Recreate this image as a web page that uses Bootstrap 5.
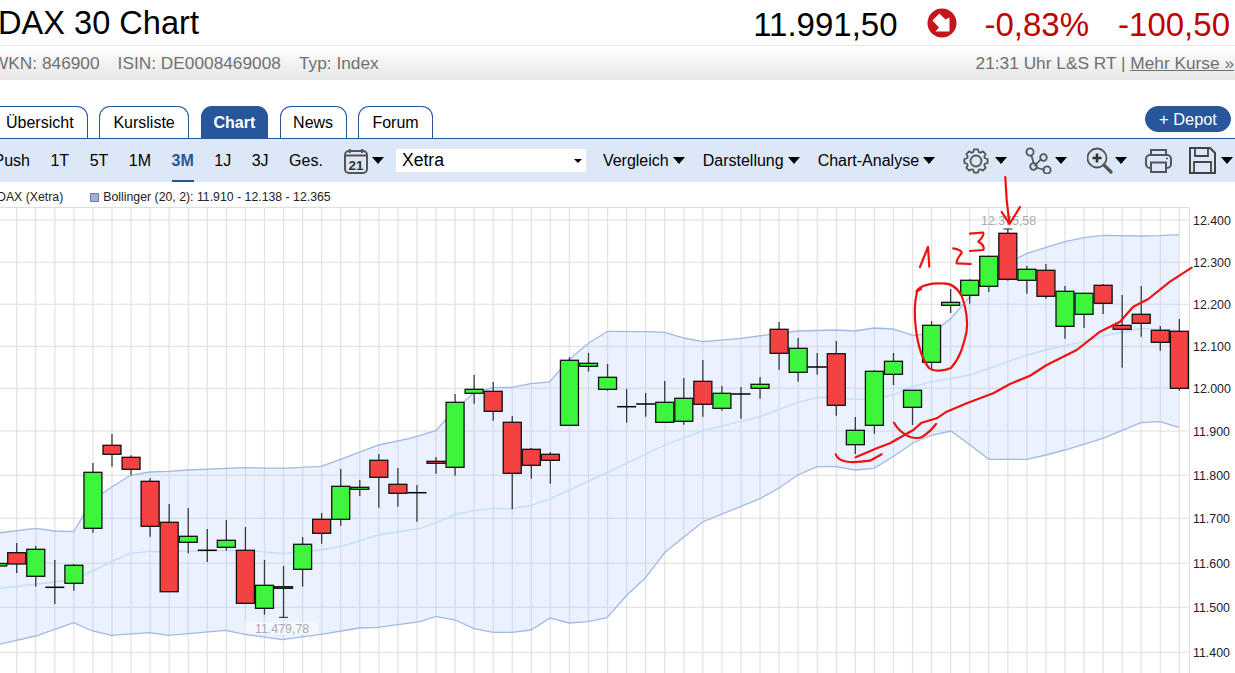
<!DOCTYPE html>
<html lang="de">
<head>
<meta charset="utf-8">
<title>DAX 30 Chart</title>
<link href="https://cdn.jsdelivr.net/npm/bootstrap@5.3.0/dist/css/bootstrap.min.css" rel="stylesheet">
<style>
html,body{height:673px;overflow:hidden;background:#fff;}
body{font-family:"Liberation Sans",Arial,sans-serif;font-size:16px;color:#000;}
.title-row{height:45px;padding-right:5px;}
.title-main{font-size:32.6px;font-weight:400;margin:0 0 0 -2px;line-height:45px;white-space:nowrap;}
.quote-val{font-size:33px;line-height:45px;margin-top:4px;white-space:nowrap;}
.quote-down{color:#c00000;}
.gap-quote{gap:29px;}
.down-sign{display:block;width:30px;height:30px;margin:0 -1px 0 0;}
.info-row{height:35px;padding-top:2px;border-top:1px solid #e8e8e8;background:linear-gradient(#fff,#e6e6e6);color:#707070;font-size:17.3px;padding-right:1px;}
.info-left{gap:18px;margin-left:-8px;}
.info-row a{color:#707070;}
.tab-row{margin-top:26px;height:33px;border-bottom:1px solid #27569b;padding-right:4px;}
.tab-list{gap:11.3px;margin-left:-10px;border:0;}
.tab-link{display:block;height:32px;line-height:32px;padding:0 13.5px;color:#000;background:#fff;border:1px solid #27569b;border-bottom:0;border-radius:11px 11px 0 0;text-decoration:none;}
.tab-first{padding:0 13px 0 15px;}
.tab-tight{padding:0 12.5px;}
.tab-link.is-on{background:#27569b;color:#fff;font-weight:700;padding:0 12px;}
.depot-btn{width:86px;height:26px;line-height:24px;padding:0;margin-left:1px;border-radius:13px;background:#27569b;border-color:#27569b;color:#fff;font-size:16.4px;}
.tool-row{height:43px;background:#dce8f8;}
.range-list{gap:20.5px;margin-left:-6.5px;}
.range-item{color:#000;text-decoration:none;line-height:43px;display:block;height:43px;}
.range-item.is-on{color:#27569b;font-weight:700;border-bottom:2px solid #27569b;}
.tri{display:inline-block;width:0;height:0;border-left:6px solid transparent;border-right:6px solid transparent;border-top:7px solid #000;}
.ico{display:block;flex:none;}
.cal-wrap{margin-left:21px;gap:4px;}
.market-select{width:192px;height:25px;margin-left:11px;padding:0 0 0 6px;border:1px solid #e4e8ee;border-radius:2px;font-size:17.6px;line-height:23px;color:#000;background-size:8px 4px;background-position:right 4px center;background-image:url("data:image/svg+xml,%3Csvg xmlns='http://www.w3.org/2000/svg' viewBox='0 0 8 4'%3E%3Cpath d='M0 0h8L4 4z'/%3E%3C/svg%3E");}
.menu-item{color:#000;gap:4px;white-space:nowrap;text-decoration:none;}
.menu-a{margin-left:16px;}
.menu-b{margin-left:18px;}
.menu-c{margin-left:18px;}
.ico-a{margin-left:28px;gap:6px;}
.ico-b{margin-left:18px;gap:2px;}
.ico-c{margin-left:20px;gap:2px;}
.ico-d{margin-left:18px;}
.ico-e{margin-left:17px;gap:5px;}
.legend-row{height:25px;padding-top:5px;font-size:12.3px;color:#222;gap:27px;margin-left:-3px;}
.legend-swatch{display:inline-block;width:9px;height:9px;background:#9db0dc;border:1px solid #6f7f9f;margin-right:4px;vertical-align:-1px;}
.chart-svg{display:block;width:1235px;height:466px;overflow:visible;}
.axis-txt{font-family:"Liberation Sans",Arial,sans-serif;font-size:12.4px;fill:#222;}
.mark-txt{font-family:"Liberation Sans",Arial,sans-serif;font-size:12.4px;fill:#aaa;}
</style>
</head>
<body>
<header class="title-row d-flex justify-content-between align-items-center">
  <h1 class="title-main">DAX 30 Chart</h1>
  <div class="d-flex align-items-center gap-quote">
    <span class="quote-val">11.991,50</span>
    <svg class="down-sign" viewBox="0 0 30 30"><circle cx="15" cy="15" r="14.5" fill="#c3161c"/><path d="M12.4 5.500L18.500 11.500 22.500 9.500V23.500H8.500L12 19.500 5.500 12.500z" fill="#fff"/></svg>
    <span class="quote-val quote-down">-0,83%</span>
    <span class="quote-val quote-down">-100,50</span>
  </div>
</header>
<div class="info-row d-flex justify-content-between align-items-center">
  <div class="d-flex info-left"><span>WKN: 846900</span><span>ISIN: DE0008469008</span><span>Typ: Index</span></div>
  <div>21:31 Uhr L&amp;S RT | <a href="#">Mehr Kurse »</a></div>
</div>
<div class="tab-row d-flex justify-content-between align-items-start">
  <nav class="nav tab-list align-self-end">
    <a class="tab-link tab-first" href="#">Übersicht</a>
    <a class="tab-link" href="#">Kursliste</a>
    <a class="tab-link is-on" href="#">Chart</a>
    <a class="tab-link tab-tight" href="#">News</a>
    <a class="tab-link" href="#">Forum</a>
  </nav>
  <button class="btn depot-btn" type="button">+ Depot</button>
</div>
<div class="tool-row d-flex align-items-center">
  <div class="d-flex range-list">
    <a class="range-item" href="#">Push</a><a class="range-item" href="#">1T</a><a class="range-item" href="#">5T</a><a class="range-item" href="#">1M</a><a class="range-item is-on" href="#">3M</a><a class="range-item" href="#">1J</a><a class="range-item" href="#">3J</a><a class="range-item" href="#">Ges.</a>
  </div>
  <div class="d-flex align-items-center cal-wrap">
    <svg class="ico" width="24" height="26" viewBox="0 0 24 26"><rect x="1" y="3" width="22" height="22" rx="4" fill="none" stroke="#555" stroke-width="2"/><path d="M6 1v4M18 1v4M1 7.500h22" stroke="#555" stroke-width="2" fill="none"/><text x="12" y="21.500" text-anchor="middle" font-family="Liberation Sans" font-weight="700" font-size="13.500" fill="#333">21</text></svg>
    <span class="tri"></span>
  </div>
  <select class="form-select market-select" aria-label="Börse"><option>Xetra</option></select>
  <a class="menu-item menu-a d-flex align-items-center" href="#">Vergleich<span class="tri"></span></a>
  <a class="menu-item menu-b d-flex align-items-center" href="#">Darstellung<span class="tri"></span></a>
  <a class="menu-item menu-c d-flex align-items-center" href="#">Chart-Analyse<span class="tri"></span></a>
  <div class="d-flex align-items-center ico-a">
    <svg class="ico" width="26" height="26" viewBox="-13 -13 26 26"><path id="gearPath" fill="none" stroke="#555" stroke-width="1.800" stroke-linejoin="round"/><circle r="5.500" fill="none" stroke="#555" stroke-width="1.800"/></svg>
    <span class="tri"></span>
  </div>
  <div class="d-flex align-items-center ico-b">
    <svg class="ico" width="28" height="27" viewBox="0 0 28 27" fill="none" stroke="#555" stroke-width="1.800"><path d="M6 8C8 12 8 15 9 17M9.500 19L16 12M11 20.500L20 23"/><circle cx="5" cy="5" r="3.600"/><circle cx="18.500" cy="10.500" r="3.300"/><circle cx="8.500" cy="19.500" r="3.300"/><circle cx="22" cy="23" r="3.600"/></svg>
    <span class="tri"></span>
  </div>
  <div class="d-flex align-items-center ico-c">
    <svg class="ico" width="26" height="27" viewBox="0 0 26 27" fill="none" stroke="#555"><circle cx="10" cy="11" r="9.500" stroke-width="1.800"/><path d="M10 6.500v9M5.500 11h9" stroke="#333" stroke-width="2.600"/><path d="M17 18l7 7" stroke-width="3.200" stroke-linecap="round"/></svg>
    <span class="tri"></span>
  </div>
  <svg class="ico ico-d" width="27" height="25" viewBox="0 0 27 25" fill="none" stroke="#555" stroke-width="2"><path d="M6 7V2h15v5"/><rect x="1" y="7" width="25" height="13" rx="4"/><path d="M6 14.500h15V24H6z" fill="#dce8f8"/><path d="M21 10.500h2" stroke-width="1.500"/></svg>
  <div class="d-flex align-items-center ico-e">
    <svg class="ico" width="27" height="27" viewBox="0 0 27 27" fill="none" stroke="#444" stroke-width="2"><path d="M1 1h20l5 5v20H1z"/><path d="M6 1v8h13V1M5 26V15h17v11" stroke-width="1.800"/></svg>
    <span class="tri"></span>
  </div>
</div>
<div class="legend-row d-flex align-items-center">
  <span class="d-inline-block">DAX (Xetra)</span>
  <span><i class="legend-swatch"></i>Bollinger (20, 2): 11.910 - 12.138 - 12.365</span>
</div>
<svg class="chart-svg" id="chart" viewBox="0 207 1235 466" role="img" aria-label="DAX 30 Candlestick-Chart"></svg>
<script>
(function(){
var X=function(i){return 16.7+i*19.06;};
var hLines=[220,262.3,304.3,346.3,388.3,431,475.3,518.3,563.3,607.3,652.3];
var labels=["12.400","12.300","12.200","12.100","12.000","11.900","11.800","11.700","11.600","11.500","11.400"];
/* [index, wick top, wick bottom, body top, body bottom, type] */
var c=[[-1,558,572,563.5,566,"g"],[0,543,573,552.7,564,"r"],[1,546,586.7,549.3,576.3,"g"],[2,560,604,587.3,587.3,"d"],[3,564,590.7,565.3,583.3,"g"],[4,463,532.7,472.3,528.3,"g"],[5,434,466.7,445.3,454.3,"r"],[6,455.3,475.3,457.3,469.3,"r"],[7,478.3,536.7,481.3,526.3,"r"],[8,504,591.7,522.3,591.7,"r"],[9,508,553.3,536.3,542.3,"g"],[10,529,562,550.3,550.3,"d"],[11,520,550.7,540.3,547.3,"g"],[12,527,603.3,550.3,603.3,"r"],[13,560,614.7,585.3,608.3,"g"],[14,566,617.3,586.7,588.3,"r"],[15,537,586.7,544.3,569.3,"g"],[16,513,543.7,519.3,533.3,"r"],[17,469,525.7,486.3,519.3,"g"],[18,480,496,487.3,489.3,"g"],[19,454,507.7,460.3,477.3,"r"],[20,468,506.7,484.3,493.3,"r"],[21,485,521.7,492.7,492.7,"d"],[22,457,473.7,461.3,463.3,"r"],[23,394,475.7,402.3,467.3,"g"],[24,375,403.7,389.3,393.3,"g"],[25,382,420.7,391.3,411.3,"r"],[26,416,509.3,422.3,473.3,"r"],[27,448,478.7,449.3,465.3,"r"],[28,452,483.7,454.3,460.3,"r"],[29,357.3,425.3,360.3,425.3,"g"],[30,353,371.7,363.3,366.3,"g"],[31,364,390.7,377.3,389.3,"g"],[32,389,422.7,406.7,406.7,"d"],[33,393,416.7,404,404,"d"],[34,381,422.7,402.3,422.3,"g"],[35,378,424.7,398.3,421.3,"g"],[36,360,416.7,381.3,404.3,"r"],[37,386,410.7,393.3,408.3,"g"],[38,387,418.7,394,394,"d"],[39,377,398.7,384.3,388.3,"g"],[40,322,369.7,329.3,353.3,"r"],[41,338,381.7,348.3,372.3,"g"],[42,353,374.7,367,367,"d"],[43,341,415.7,353.7,405.3,"r"],[44,417,454,430.3,444.7,"g"],[45,370.3,433.7,371.3,425.3,"g"],[46,353,385,361.3,374.3,"g"],[47,390.3,425,390.3,407.3,"g"],[48,321,369,325.3,362.3,"g"],[49,289,313,302.3,305.3,"g"],[50,279.3,303.7,280.3,295.3,"g"],[51,256.3,292,256.3,286.3,"g"],[52,229,280.7,233.3,279.3,"r"],[53,266,293.7,269.3,280.3,"g"],[54,264,298.7,270.3,296.3,"r"],[55,286,338.7,291.3,326.3,"g"],[56,293,328,293.3,314.3,"g"],[57,284,314,285.3,303.3,"r"],[58,295,367.7,325.3,329.3,"r"],[59,286,336.7,314.3,323.3,"r"],[60,326,350.7,330.3,342.3,"r"],[61,319,390.7,331.3,388.3,"r"]];
var up=[[-2,533],[35.7,528.3],[54.6,531],[73.7,531.7],[92.5,500],[111.5,487.3],[130.5,475.3],[149.5,472],[168.5,471.3],[187.6,470],[244.6,467.7],[282.6,468.3],[321,466.3],[340.6,459.3],[378.7,445],[410,438.3],[435.7,430.7],[454.7,410],[473.7,393],[492.7,387.7],[511.7,387.3],[530.7,383.7],[549.7,382],[568.7,360],[588.7,343],[607.7,331.3],[646,331.7],[665,332.3],[684,338],[703,341.7],[741,338.3],[779,333.3],[798,331],[836,330],[855,331],[874,328],[893,329],[913,335.3],[932,333.3],[951,318.3],[970,296.7],[989,273],[1008,263.3],[1027,253.3],[1046,247.3],[1065,241.7],[1084,237.7],[1103,235.3],[1141,236],[1160,235.7],[1179,234.7]];
var mid=[[-2,588.7],[54.6,582],[73.7,580],[111.5,561.7],[130.5,553.3],[149.5,551.3],[168.5,551.7],[244.6,550.3],[282.6,553.3],[321,550],[340.6,546.7],[378.7,535],[420,528.3],[436,522.7],[455,514.7],[474,510.7],[493,508.3],[512,508.7],[531,505.3],[549,499.3],[607,472.7],[665,445],[703,430.7],[760,416.7],[798,402.3],[817,397.7],[836,397.5],[855,399.3],[874,399],[893,395],[913,386.7],[932,381.7],[951,378.3],[970,375],[989,368.3],[1008,361.7],[1027,355],[1046,350],[1065,345.7],[1084,341.7],[1103,336],[1141,328.3],[1160,329.3],[1179,330]];
var lo=[[-2,644.5],[35.7,636],[73.7,622.7],[92.5,631],[111.5,635.3],[149.5,632.7],[168.5,635.3],[225.6,630.3],[244.6,634.3],[282.6,639.7],[321,634.3],[359.6,628],[378,627.3],[420,621.7],[436,616.3],[455,620],[474,628.7],[493,632.3],[512,632.3],[531,630],[550,618],[569,623],[588,621.7],[607,617.7],[627,595],[645,578.3],[665,552.3],[703,521.7],[760,498.7],[779,488],[798,475],[817,466.7],[836,466.7],[855,470],[874,468.3],[893,456.7],[913,443],[932,435],[951,431],[970,445],[989,459.3],[1027,459.3],[1046,455],[1065,450],[1103,438.3],[1141,422.7],[1160,421.7],[1179,427.3]];
var pts=function(a){return a.map(function(p){return p[0]+","+p[1];}).join(" ");};
var s="";
for(var i=-1;i<=61;i++){s+='<line x1="'+X(i)+'" x2="'+X(i)+'" y1="207.500" y2="673" stroke="#e4e4e4" stroke-width="1.300"/>';}
hLines.forEach(function(y,k){s+='<line x1="0" x2="1189.500" y1="'+y+'" y2="'+y+'" stroke="#dedede" stroke-width="1.100"/>';
 s+='<text class="axis-txt" x="1193" y="'+(y+4.500)+'">'+labels[k]+'</text>';});
s+='<line x1="0" x2="1189.500" y1="207.500" y2="207.500" stroke="#dedede"/><line x1="1189.500" x2="1189.500" y1="207.500" y2="673" stroke="#dedede" stroke-width="1.200"/>';
s+='<polygon points="'+pts(up)+' '+pts(lo.slice().reverse())+'" fill="rgb(150,190,255)" fill-opacity=".2"/>';
s+='<polyline points="'+pts(up)+'" fill="none" stroke="#a3b8e6" stroke-width="1.300"/>';
s+='<polyline points="'+pts(lo)+'" fill="none" stroke="#a3b8e6" stroke-width="1.300"/>';
s+='<polyline points="'+pts(mid)+'" fill="none" stroke="#c6daf9" stroke-width="1.300"/>';
c.forEach(function(d){var x=X(d[0]);
 s+='<line x1="'+x+'" x2="'+x+'" y1="'+d[1]+'" y2="'+d[2]+'" stroke="#3a3a3a" stroke-width="1.300"/>';
 if(d[5]==="d"){s+='<line x1="'+(x-9.500)+'" x2="'+(x+9.500)+'" y1="'+d[3]+'" y2="'+d[3]+'" stroke="#000" stroke-width="1.500"/>';}
 else{s+='<rect x="'+(x-9)+'" y="'+d[3]+'" width="18" height="'+(d[4]-d[3])+'" fill="'+(d[5]==="g"?"#3ef53e":"#f44141")+'" stroke="#111" stroke-width="1.300"/>';}
});
s+='<line x1="'+(X(14)-4.500)+'" x2="'+(X(14)+4.500)+'" y1="617.300" y2="617.300" stroke="#222"/><line x1="'+(X(52)-4.500)+'" x2="'+(X(52)+4.500)+'" y1="229" y2="229" stroke="#222"/>';
s+='<rect x="245" y="622" width="73" height="12" fill="#fff" fill-opacity=".5"/>';
s+='<text class="mark-txt" x="255" y="632.500">11.479,78</text><text class="mark-txt" x="981" y="225">12.375,58</text>';
var red='fill="none" stroke="#f01010" stroke-width="2.200" stroke-linecap="round" stroke-linejoin="round"';
var rl=[[855.7,457.3],[876.7,448.3],[890,443.3],[913.3,430],[921.7,422.7],[936.7,418.3],[946.7,411.7],[966.7,403.3],[993.3,393.3],[1010,384],[1030,375.7],[1046.7,365],[1076.7,350],[1100,331.7],[1120,321.7],[1133.3,306.7],[1148.3,299],[1170,281.7],[1191.7,267.7]];
s+='<polyline points="'+pts(rl)+'" '+red+'/>';
s+='<path d="M835.700 454.300Q838 460 846 461.500T870 460.700L881.700 454.300" '+red+'/>';
s+='<path d="M894 422.700Q899 432 910 437Q918 439 922 437Q930 432 936 424" '+red+'/>';
s+='<path d="M916.500 291.500C920 285 932 283 942 283.500C952 283 958 289 961.700 296C966 308 968 322 966.500 332C963 347 960 358 951 368C944 371 934 372 929 368C921 358 918 345 916 330C914 315 914 304 917 292M916.500 291.500L921 289" '+red+'/>';
s+='<path d="M920 267L928 247L929.300 266.700" '+red+'/>';
s+='<path d="M953.300 248.300Q962 250 961.700 253Q956 260 956.700 263.300L970.700 264" '+red+'/>';
s+='<path d="M970 233.700L983 232.500Q985 235 978.300 241.700Q985 245 983.300 250L970 251" '+red+'/>';
s+='<path d="M1005.300 177Q1006 200 1009.500 224M1001.700 212L1009.500 224L1020 207" '+red+'/>';
document.getElementById("chart").innerHTML=s;
var g="";
for(var t=0;t<8;t++){var a=t*Math.PI/4;
 [[-.3,9.3],[-.17,11.8],[.17,11.8],[.3,9.3]].forEach(function(q){var an=a+q[0];g+=(g?"L":"M")+(q[1]*Math.cos(an)).toFixed(2)+" "+(q[1]*Math.sin(an)).toFixed(2);});}
document.getElementById("gearPath").setAttribute("d",g+"Z");
})();
</script>
<script src="https://cdn.jsdelivr.net/npm/bootstrap@5.3.0/dist/js/bootstrap.bundle.min.js"></script>
</body>
</html>
